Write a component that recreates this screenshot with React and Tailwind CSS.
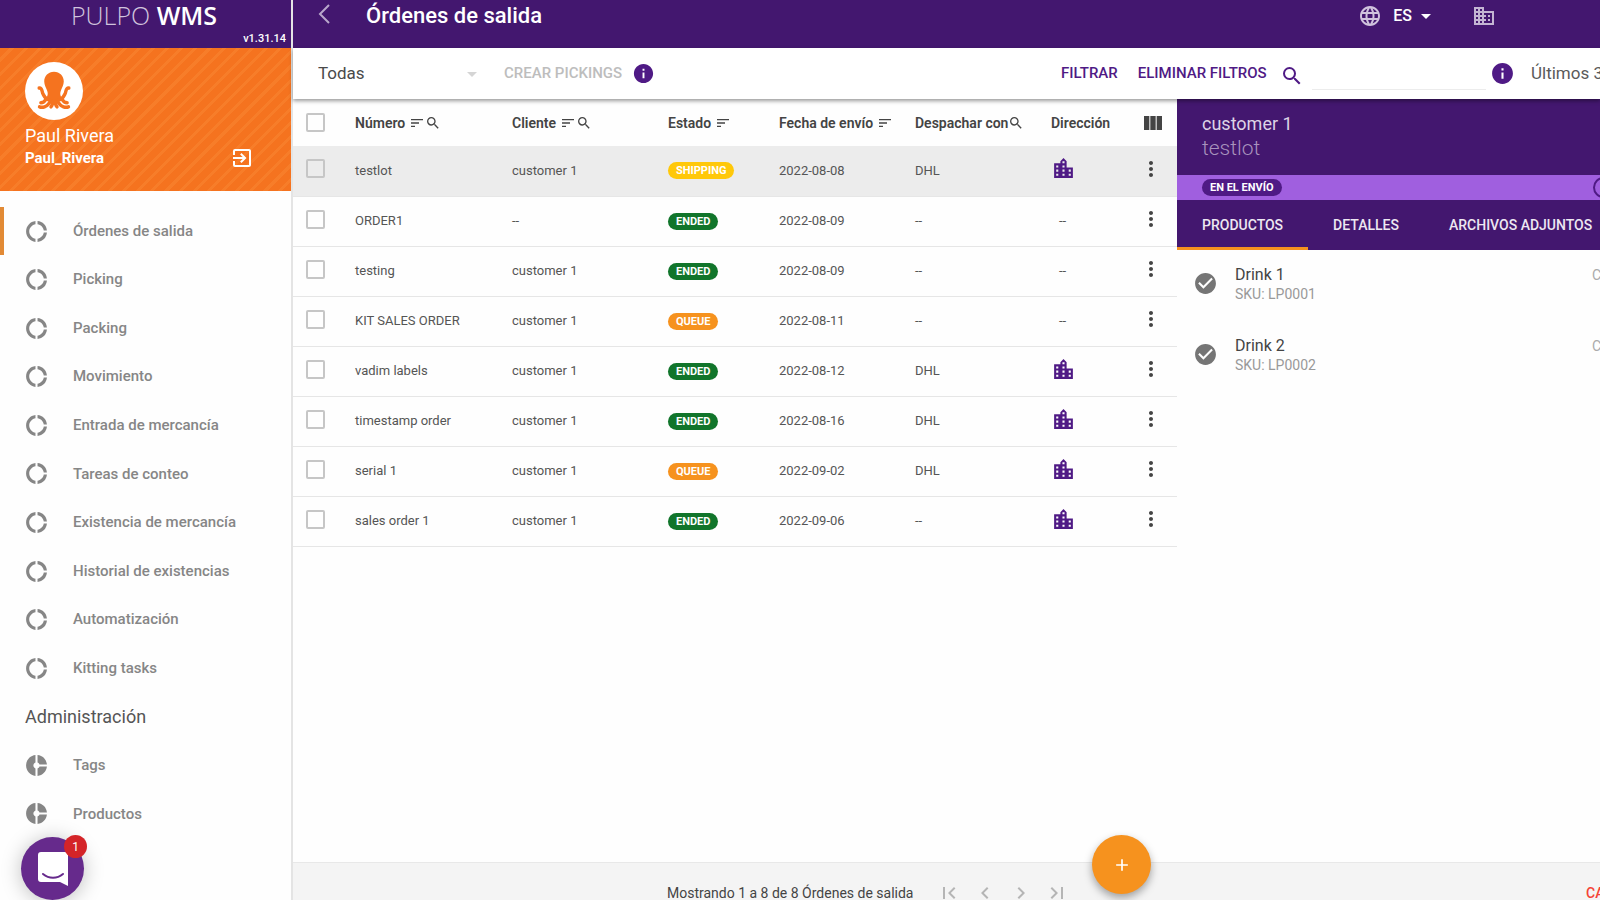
import React, { useState } from 'react';
import {
  MdAdd,
  MdArrowDropDown,
  MdBusiness,
  MdCheckCircle,
  MdChevronLeft,
  MdChevronRight,
  MdDonutLarge,
  MdDonutSmall,
  MdExitToApp,
  MdFirstPage,
  MdInfo,
  MdLanguage,
  MdLastPage,
  MdLocationCity,
  MdMoreVert,
  MdSearch,
  MdSort,
  MdViewColumn,
} from 'react-icons/md';

const menu = [
  { label: 'Órdenes de salida', active: true },
  { label: 'Picking' },
  { label: 'Packing' },
  { label: 'Movimiento' },
  { label: 'Entrada de mercancía' },
  { label: 'Tareas de conteo' },
  { label: 'Existencia de mercancía' },
  { label: 'Historial de existencias' },
  { label: 'Automatización' },
  { label: 'Kitting tasks' },
];

const adminMenu = [{ label: 'Tags' }, { label: 'Productos' }];

const columns = [
  { label: 'Número', sort: true, search: true },
  { label: 'Cliente', sort: true, search: true },
  { label: 'Estado', sort: true },
  { label: 'Fecha de envío', sort: true },
  { label: 'Despachar con', search: true },
  { label: 'Dirección' },
];

const orders = [
  { number: 'testlot', customer: 'customer 1', state: 'SHIPPING', date: '2022-08-08', carrier: 'DHL', address: true },
  { number: 'ORDER1', customer: '--', state: 'ENDED', date: '2022-08-09', carrier: '--', address: false },
  { number: 'testing', customer: 'customer 1', state: 'ENDED', date: '2022-08-09', carrier: '--', address: false },
  { number: 'KIT SALES ORDER', customer: 'customer 1', state: 'QUEUE', date: '2022-08-11', carrier: '--', address: false },
  { number: 'vadim labels', customer: 'customer 1', state: 'ENDED', date: '2022-08-12', carrier: 'DHL', address: true },
  { number: 'timestamp order', customer: 'customer 1', state: 'ENDED', date: '2022-08-16', carrier: 'DHL', address: true },
  { number: 'serial 1', customer: 'customer 1', state: 'QUEUE', date: '2022-09-02', carrier: 'DHL', address: true },
  { number: 'sales order 1', customer: 'customer 1', state: 'ENDED', date: '2022-09-06', carrier: '--', address: true },
];

const stateColors = {
  SHIPPING: 'bg-[#ffc80a]',
  ENDED: 'bg-[#11752b]',
  QUEUE: 'bg-[#f6921e]',
};

const products = [
  { name: 'Drink 1', sku: 'LP0001' },
  { name: 'Drink 2', sku: 'LP0002' },
];

const checkboxClass = 'block size-[19px] appearance-none rounded-[2px] border-2 border-[#c6c6c6] checked:bg-[#4f1a85]';

const OctopusLogo = () => (
  <svg viewBox="0 0 172 172" className="size-[58px]" aria-hidden="true">
    <circle cx="86" cy="86" r="86" fill="#fff" />
    <path
      d="M86 29c-17 0-29 13-29 29 0 11 6 19 9 28 3 8 1 15-3 21l23 12 23-12c-4-6-6-13-3-21 3-9 9-17 9-28 0-16-12-29-29-29z"
      fill="#f5731f"
    />
    <g fill="none" stroke="#f5731f" strokeWidth="10" strokeLinecap="round" strokeLinejoin="round">
      <path d="M42 77c9-1 8 9 11 17 3 8 8 14 16 18M130 77c-9-1-8 9-11 17-3 8-8 14-16 18" />
      <path d="M62 111c-4 7-8 10-15 10M58 133c-6 2-10 2-15 0M76 114c-4 10-9 16-18 19M110 111c4 7 8 10 15 10M114 133c6 2 10 2 15 0M96 114c4 10 9 16 18 19" />
      <path d="M81 118c1 7 0 11-4 15M91 118c-1 7 0 11 4 15" />
    </g>
  </svg>
);

const MenuItem = ({ label, active, icon: Icon }) => (
  <li>
    <a
      href="#"
      className={`flex h-12 items-center gap-6 border-l-4 pl-5 text-[15px] font-medium text-[#868686] ${
        active ? 'border-[#e28a35]' : 'border-transparent'
      }`}
    >
      <Icon className="size-[25px] shrink-0" />
      {label}
    </a>
  </li>
);

const Sidebar = () => (
  <aside className="flex w-[293px] shrink-0 flex-col border-r-2 border-[#e4e4e4] bg-[#fefefe]">
    <div className="flex h-12 shrink-0 flex-col justify-between bg-[#43176f] text-white">
      <div className="pl-[71px] font-['Open_Sans',sans-serif] text-[25px] leading-[30px] font-light text-[#d0c3dd]">
        PULPO <span className="font-semibold text-white">WMS</span>
      </div>
      <div className="pr-[5px] text-right text-[11px] leading-[18px] font-medium">v1.31.14</div>
    </div>

    <div className="flex h-[143px] shrink-0 flex-col bg-[repeating-linear-gradient(135deg,#f5731f_0px,#f5731f_7px,#f77d29_7px,#f77d29_10px)] pt-[14px] pl-[25px] text-white">
      <OctopusLogo />
      <div className="mt-1 text-lg leading-6">Paul Rivera</div>
      <div className="flex items-center justify-between pr-[37px]">
        <span className="text-[15px] leading-5 font-bold">Paul_Rivera</span>
        <button type="button" aria-label="Cerrar sesión" className="-my-1">
          <MdExitToApp className="size-6" />
        </button>
      </div>
    </div>

    <nav className="flex min-h-0 flex-1 pt-4 pb-[62px]">
      <ul className="flex flex-1 flex-col justify-between">
        {menu.map((item) => (
          <MenuItem key={item.label} {...item} icon={MdDonutLarge} />
        ))}
        <li className="flex h-12 items-center pl-[25px] text-lg text-[#555]">Administración</li>
        {adminMenu.map((item) => (
          <MenuItem key={item.label} {...item} icon={MdDonutSmall} />
        ))}
      </ul>
    </nav>
  </aside>
);

const TopBar = () => (
  <header className="flex h-12 shrink-0 items-center bg-[#43176f] pr-[104px] pb-4 pl-[25px] text-white">
    <button type="button" aria-label="Volver" className="pb-1 text-[#b9a7cb]">
      <svg viewBox="0 0 12 20" className="h-5 w-3" fill="none" stroke="currentColor" strokeWidth="2" aria-hidden="true">
        <path d="M11 1l-9 9 9 9" />
      </svg>
    </button>
    <h1 className="ml-9 flex-1 text-[22px] leading-7 font-medium">Órdenes de salida</h1>
    <MdLanguage className="size-6 text-[#d0c3dd]" />
    <button type="button" className="ml-[11px] flex items-center gap-0.5 text-base font-medium">
      ES
      <MdArrowDropDown className="size-6" />
    </button>
    <button type="button" aria-label="Empresa" className="ml-[34px] text-[#c4b5d3]">
      <MdBusiness className="size-6" />
    </button>
  </header>
);

const Toolbar = ({ view, onView }) => (
  <div className="relative z-10 flex h-[51px] shrink-0 items-center overflow-x-clip bg-white pl-[25px] shadow-[0_2px_4px_rgba(0,0,0,0.4)]">
    <div className="relative flex w-[166px] items-center">
      <select
        aria-label="Vista"
        value={view}
        onChange={(e) => onView(e.target.value)}
        className="w-full appearance-none bg-transparent text-[17px] text-[#4a4a4a]"
      >
        <option>Todas</option>
      </select>
      <MdArrowDropDown className="pointer-events-none absolute right-0 size-6 text-[#d5d5d5]" />
    </div>
    <button type="button" disabled className="ml-5 text-[15px] font-medium text-[#bdbdbd]">
      CREAR PICKINGS
    </button>
    <MdInfo className="ml-[10px] size-[23px] text-[#4f1a85]" />

    <div className="ml-auto flex w-[539px] shrink-0 items-center">
      <button type="button" className="text-[15px] font-medium text-[#4f1a85]">FILTRAR</button>
      <button type="button" className="ml-5 text-[15px] font-medium text-[#4f1a85]">ELIMINAR FILTROS</button>
      <label htmlFor="search" className="ml-[13px] pt-1">
        <MdSearch className="size-6 text-[#4f1a85]" />
      </label>
      <input
        id="search"
        type="text"
        aria-label="Buscar"
        className="ml-2 h-8 min-w-0 flex-1 border-b border-[#ececec] bg-transparent text-sm outline-none"
      />
      <MdInfo className="ml-1 size-[25px] shrink-0 text-[#4f1a85]" />
      <div className="ml-4 w-[69px] shrink-0 text-[17px] whitespace-nowrap text-[#5a5a5a]">Últimos 30 días</div>
    </div>
  </div>
);

const OrdersTable = ({ checked, onCheck }) => (
  <table className="w-full table-fixed border-collapse text-left text-[13px] text-[#555]">
    <colgroup>
      <col className="w-[62px]" />
      <col className="w-[157px]" />
      <col className="w-[156px]" />
      <col className="w-[111px]" />
      <col className="w-[136px]" />
      <col className="w-[136px]" />
      <col />
      <col className="w-[52px]" />
    </colgroup>
    <thead>
      <tr className="h-[47px] text-[#444]">
        <th className="pl-[13px]">
          <input type="checkbox" aria-label="Seleccionar todas" className={checkboxClass} />
        </th>
        {columns.map((col) => (
          <th key={col.label} className="text-sm font-semibold whitespace-nowrap">
            <span className="flex items-center">
              {col.label}
              {col.sort && <MdSort className="ml-1 size-4" />}
              {col.search && <MdSearch className="size-4" />}
            </span>
          </th>
        ))}
        <th>
          <button type="button" aria-label="Columnas" className="block pl-4">
            <MdViewColumn className="size-6" />
          </button>
        </th>
      </tr>
    </thead>
    <tbody>
      {orders.map((order, i) => (
        <tr key={order.number} className={`h-[50px] border-b border-[#e6e6e6] ${i === 0 ? 'bg-[#ececec]' : ''}`}>
          <td className="pb-1 pl-[13px]">
            <input
              type="checkbox"
              aria-label={order.number}
              checked={!!checked[order.number]}
              onChange={() => onCheck(order.number)}
              className={checkboxClass}
            />
          </td>
          <td>{order.number}</td>
          <td>{order.customer}</td>
          <td>
            <span
              className={`block w-fit rounded-full px-2 text-[11px] leading-[17px] font-bold text-white ${stateColors[order.state]}`}
            >
              {order.state}
            </span>
          </td>
          <td>{order.date}</td>
          <td>{order.carrier}</td>
          <td>
            {order.address ? (
              <MdLocationCity className="mb-1 size-[25px] text-[#4f1a85]" />
            ) : (
              <span className="pl-2">--</span>
            )}
          </td>
          <td className="pb-1">
            <button type="button" aria-label="Más acciones" className="block pl-[14px] text-[#444]">
              <MdMoreVert className="size-6" />
            </button>
          </td>
        </tr>
      ))}
    </tbody>
  </table>
);

const DetailPanel = () => (
  <section className="w-[423px] shrink-0 overflow-hidden bg-[#fefefe]">
    <div className="h-[76px] bg-[#43176f] pt-[13px] pl-[25px] text-lg leading-6">
      <div className="text-[#ddd3e6]">customer 1</div>
      <div className="text-[21px] leading-6 font-light text-[#a892bd]">testlot</div>
    </div>
    <div className="flex h-[25px] items-center justify-between bg-[#a05fdf] pl-[25px]">
      <span className="rounded-full bg-[#4f1a85] px-2 text-[11px] leading-[17px] font-bold text-white">EN EL ENVÍO</span>
      <span className="-mr-[14px] size-[21px] rounded-full border-2 border-[#4f1a85]"></span>
    </div>
    <div role="tablist" className="flex h-[50px] bg-[#43176f] text-sm font-medium whitespace-nowrap text-[#ede7f2]">
      <button type="button" role="tab" aria-selected="true" className="border-b-[3px] border-[#f6921e] px-[25px] pt-0.5">
        PRODUCTOS
      </button>
      <button type="button" role="tab" aria-selected="false" className="border-b-[3px] border-transparent px-[25px] pt-0.5">
        DETALLES
      </button>
      <button type="button" role="tab" aria-selected="false" className="border-b-[3px] border-transparent px-[25px] pt-0.5">
        ARCHIVOS ADJUNTOS
      </button>
    </div>
    <ul className="pt-px">
      {products.map((product) => (
        <li key={product.sku} className="flex h-[71px] items-start pl-4">
          <MdCheckCircle className="mt-5 size-[25px] text-[#757575]" />
          <div className="ml-[17px] flex-1 pt-[14px]">
            <div className="text-base leading-5 text-[#444]">{product.name}</div>
            <div className="text-sm leading-[18px] text-[#999]">SKU: {product.sku}</div>
          </div>
          <div className="w-2 pt-[14px] text-sm leading-5 text-[#aaa]">Cantidad</div>
        </li>
      ))}
    </ul>
  </section>
);

const Footer = () => (
  <footer className="flex h-[38px] shrink-0 items-start border-t border-[#e8e8e8] bg-[#f4f4f4] pt-[18px] pl-[374px]">
    <div className="text-sm leading-6 whitespace-nowrap text-[#444]">Mostrando 1 a 8 de 8 Órdenes de salida</div>
    <div className="ml-6 flex gap-3 text-[#b5b5b5]">
      <button type="button" aria-label="Primera página"><MdFirstPage className="size-6" /></button>
      <button type="button" aria-label="Página anterior"><MdChevronLeft className="size-6" /></button>
      <button type="button" aria-label="Página siguiente"><MdChevronRight className="size-6" /></button>
      <button type="button" aria-label="Última página"><MdLastPage className="size-6" /></button>
    </div>
    <button type="button" className="ml-auto w-[14px] text-left text-sm leading-6 font-medium text-[#f44336]">
      CANCELAR
    </button>
  </footer>
);

const ChatButton = () => (
  <div className="absolute bottom-0 left-[21px]">
    <button
      type="button"
      aria-label="Chat"
      className="flex size-[63px] items-center justify-center rounded-full bg-[#662a8c] shadow-[0_2px_20px_rgba(0,0,0,0.25)]"
    >
      <svg viewBox="0 0 30 34" className="h-[34px] w-[30px]" aria-hidden="true">
        <path d="M3 0h24a3 3 0 0 1 3 3v31l-8-4H3a3 3 0 0 1-3-3V3a3 3 0 0 1 3-3z" fill="#fff" />
        <path d="M5 22c6 5 14 5 20 0" fill="none" stroke="#662a8c" strokeWidth="2" strokeLinecap="round" />
      </svg>
    </button>
    <span className="absolute -top-[2px] -right-[3px] flex size-[23px] items-center justify-center rounded-full bg-[#d42428] text-xs text-white">
      1
    </span>
  </div>
);

const App = () => {
  const [view, setView] = useState('Todas');
  const [checked, setChecked] = useState({});

  const toggleOrder = (number) => {
    setChecked({ ...checked, [number]: !checked[number] });
  };

  return (
    <div className="relative flex h-screen overflow-hidden bg-[#fefefe] font-[Roboto,sans-serif]">
      <Sidebar />

      <div className="relative flex min-w-0 flex-1 flex-col">
        <TopBar />
        <Toolbar view={view} onView={setView} />
        <main className="flex min-h-0 flex-1">
          <div className="min-w-0 flex-1">
            <OrdersTable checked={checked} onCheck={toggleOrder} />
          </div>
          <DetailPanel />
        </main>
        <Footer />

        {/* Floating add button */}
        <button
          type="button"
          aria-label="Nueva orden"
          className="absolute right-[449px] bottom-[6px] flex size-[59px] items-center justify-center rounded-full bg-[#f6921e] text-white shadow-[0_4px_8px_rgba(0,0,0,0.35)]"
        >
          <MdAdd className="size-5" />
        </button>
      </div>

      <ChatButton />
    </div>
  );
};

export default App;
